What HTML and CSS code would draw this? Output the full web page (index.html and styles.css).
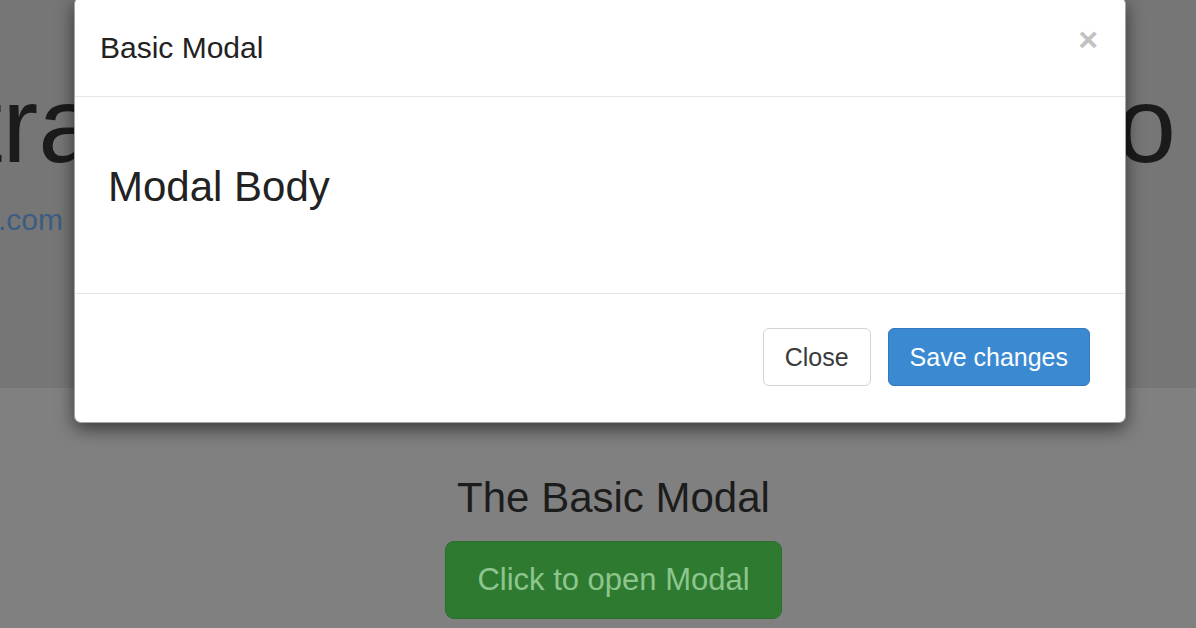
FILE: index.html
```html
<!DOCTYPE html>
<html lang="en">
<head>
<meta charset="utf-8">
<title>Basic Modal</title>
<link rel="stylesheet" href="styles.css">
</head>
<body>
  <div class="page">
    <header class="jumbotron">
      <div class="title-row">
        <h1 class="big-title">Bootstrap Modal Popup Demo</h1>
      </div>
      <div class="link-row">
        <a class="site-link" href="#">www.tutorialrepublic.com</a>
      </div>
    </header>
    <main class="content">
      <h2 class="section-title">The Basic Modal</h2>
      <button class="btn-open">Click to open Modal</button>
    </main>
  </div>

  <div class="modal">
    <div class="modal-header">
      <h4 class="modal-title">Basic Modal</h4>
      <button class="modal-close" aria-label="Close">&times;</button>
    </div>
    <div class="modal-body">
      <h3 class="body-text">Modal Body</h3>
    </div>
    <div class="modal-footer">
      <button class="btn btn-default">Close</button>
      <button class="btn btn-primary">Save changes</button>
    </div>
  </div>
</body>
</html>
```

FILE: styles.css
```css
* { box-sizing: border-box; }

html, body {
  margin: 0;
  padding: 0;
  width: 1196px;
  height: 628px;
  overflow: hidden;
  background: #808080;
  font-family: "Liberation Sans", Arial, sans-serif;
  color: #1c1c1c;
}

.page {
  display: flex;
  flex-direction: column;
  width: 1196px;
}

.jumbotron {
  height: 388px;
  background: #767676;
  padding-top: 71px;
  display: flex;
  flex-direction: column;
}

.title-row {
  width: 1176px;
  display: flex;
  justify-content: flex-end;
}

.big-title {
  margin: 0;
  font-size: 108px;
  line-height: 108px;
  font-weight: normal;
  white-space: nowrap;
  word-spacing: 11px;
  color: #1b1b1b;
}

.link-row {
  width: 63px;
  margin-top: 26px;
  display: flex;
  justify-content: flex-end;
}

.site-link {
  font-size: 30px;
  line-height: 30px;
  white-space: nowrap;
  color: #3c5d82;
  text-decoration: none;
}

.content {
  display: flex;
  flex-direction: column;
  align-items: center;
  padding-left: 31px;
  padding-top: 87px;
}

.section-title {
  margin: 0;
  font-size: 42px;
  line-height: 46px;
  font-weight: normal;
  color: #1c1c1c;
}

.btn-open {
  margin-top: 20px;
  width: 337px;
  height: 78px;
  font-family: "Liberation Sans", Arial, sans-serif;
  font-size: 31px;
  color: #8cc68c;
  background: #2f7a31;
  border: 1px solid #2b6f2c;
  border-radius: 9px;
  padding: 0;
}

/* Modal */
.modal {
  position: absolute;
  left: 74px;
  top: -3px;
  width: 1052px;
  background: #fff;
  border: 1px solid rgba(0, 0, 0, 0.35);
  border-radius: 7px;
  box-shadow: 0 6px 18px rgba(0, 0, 0, 0.55);
  display: flex;
  flex-direction: column;
}

.modal-header {
  display: flex;
  justify-content: space-between;
  align-items: flex-start;
  padding: 29px 27px 27px 25px;
  border-bottom: 1px solid #e5e5e5;
}

.modal-title {
  margin: 0;
  font-size: 30px;
  line-height: 42px;
  font-weight: normal;
  color: #222;
}

.modal-close {
  margin-top: -5px;
  padding: 0;
  border: 0;
  background: none;
  font-family: "Liberation Sans", Arial, sans-serif;
  font-size: 34px;
  line-height: 34px;
  font-weight: bold;
  color: #c2c2c2;
}

.modal-body {
  padding: 67px 25px 83px 33px;
}

.body-text {
  margin: 0;
  font-size: 42px;
  line-height: 46px;
  font-weight: normal;
  color: #222;
}

.modal-footer {
  display: flex;
  justify-content: flex-end;
  gap: 17px;
  padding: 34px 35px 36px 25px;
  border-top: 1px solid #e5e5e5;
}

.btn {
  height: 58px;
  padding: 0 21px;
  font-family: "Liberation Sans", Arial, sans-serif;
  font-size: 25px;
  line-height: 56px;
  border-radius: 6px;
  border: 1px solid #ccc;
}

.btn-default {
  background: #fff;
  color: #3a3a3a;
  border-color: #d4d4d4;
}

.btn-primary {
  background: #3b89d1;
  color: #fafdff;
  border-color: #3379bd;
}
```
